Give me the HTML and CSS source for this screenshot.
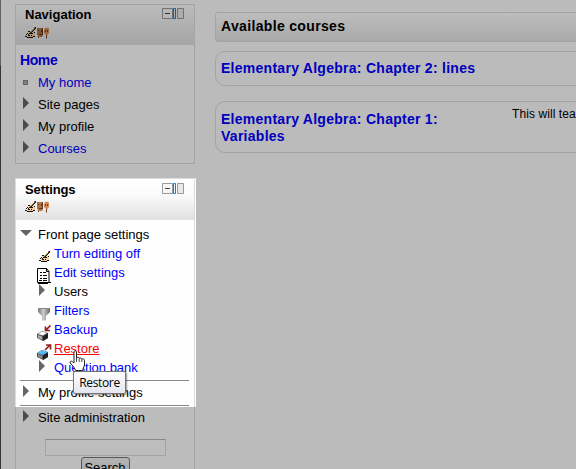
FILE: index.html
```html
<!DOCTYPE html>
<html lang="en">
<head>
<meta charset="utf-8">
<title>Course administration</title>
<link rel="stylesheet" href="styles.css">
</head>
<body>
<svg class="defs" width="0" height="0">
  <symbol id="hand" viewBox="0 0 11 11"><path d="M2 8 4 4.500 6 4 10 5V9L8 10H3z" fill="#f3cf9f"/><path d="M0 9h2v1H0zM1 7h1v1H1zM2 6h1v1H2zM3 4h2v1H3zM2 10h6v1H2zM8 9h2v1H8zM3 8h2v1H3zM9 5h1v1H9zM5 6h3v1H5zM6 8h1v1H6z" fill="#111"/><path d="M3 7h1V6h1V5h1V4h1V3h1V2h1V1h1V0h1v2h-1v1H9v1H8v1H7v1H6v1H4v1H3z" fill="#222"/><path d="M5 5.500 9 1.500" stroke="#e7d64a" stroke-width=".9"/><path d="M9 0h1v1H9z" fill="#b56b7d"/></symbol>
  <symbol id="roles" viewBox="0 0 12 12"><path d="M0 1h6v7l-1 2H3L0 8z" fill="#b07247"/><path d="M1 3h1v1H1zM4 3h1v2H4zM2 7h3v1H2zM5 1h1v7H5z" fill="#5b351e"/><path d="M8 1 10 0.500 12 1.500V6L10.500 8H9L7 6V3z" fill="#d18a51"/><path d="M8.500 3v2M10.500 3v2M9.500 8v3.500M1.500 9v2" stroke="#754421"/></symbol>
  <symbol id="dock" viewBox="0 0 22 11"><path d="M.5.500h10v10H.5z" fill="#f7f7f7" stroke="#999"/><path d="M3 5.500h5" stroke="#444"/><path d="M11.500.500h2v10h-2z" fill="#e9f5ff" stroke="#0c80df"/><path d="M15.500.500h6v10h-6z" fill="#e8e8e8" stroke="#999"/></symbol>
</svg>
<div class="page">
  <div class="edge"></div>
  <aside class="sidebar">
    <section class="block nav">
      <header class="head">
        <h2>Navigation</h2><svg class="dock"><use href="#dock"/></svg>
        <div class="tools"><svg><use href="#hand"/></svg><svg class="roles"><use href="#roles"/></svg></div>
      </header>
      <ul class="tree">
        <li class="home"><a>Home</a></li>
        <li><i class="dot"></i><a>My home</a></li>
        <li><i class="arrow"></i>Site pages</li>
        <li><i class="arrow"></i>My profile</li>
        <li><i class="arrow"></i><a>Courses</a></li>
      </ul>
    </section>
    <section class="block settings">
      <header class="head">
        <h2>Settings</h2><svg class="dock"><use href="#dock"/></svg>
        <div class="tools"><svg><use href="#hand"/></svg><svg class="roles"><use href="#roles"/></svg></div>
      </header>
      <div class="branch"><i class="arrow open"></i>Front page settings</div>
      <ul class="sub">
        <li><svg class="ico edit" viewBox="0 0 11 11"><use href="#hand"/></svg><a>Turn editing off</a></li>
        <li><svg class="ico doc" viewBox="0 0 15 16"><path d="M.5.500h9l2.500 3V14.500H.5z" fill="#fff" stroke="#000"/><path d="M9.500.500v3H12M3 4.500h2m1 0h3M3 7.500h2m1 0h4M3 10.500h2m1 0h4M2 12.500h3m1 0h4M1 15.500h10M12 14.500h2" fill="none" stroke="#000"/></svg><a>Edit settings</a></li>
        <li><i class="arrow"></i>Users</li>
        <li><svg class="ico filter" viewBox="0 0 12 13"><defs><linearGradient id="metal"><stop stop-color="#777"/><stop offset=".45" stop-color="#ccc"/><stop offset="1" stop-color="#666"/></linearGradient></defs><path d="M0 0h12v4L8 8v4.500H4V8L0 4z" fill="url(#metal)"/><path d="M0 .500h12" stroke="#888"/></svg><a>Filters</a></li>
        <li><svg class="ico cube" viewBox="0 0 15 16"><path d="M0 9 5 6l6 2v5l-5 3-6-3z" fill="#555"/><path d="M6 11l5-3v5l-5 3z" fill="#222"/><path d="M1 9l4-2.500L10 8l-4 2.500z" fill="#fff"/><path d="M1 10l4 1.500v3L1 13z" fill="#aaa"/><path d="M13.500 .500 9 5M8.500 1.500v4H13" fill="none" stroke="#8d1d22" stroke-width="1.700"/></svg><a>Backup</a></li>
        <li><svg class="ico cube" viewBox="0 0 15 16"><path d="M0 9 5 6l6 2v5l-5 3-6-3z" fill="#555"/><path d="M6 11l5-3v5l-5 3z" fill="#222"/><path d="M0 9l5-3 6 2-5 3z" fill="#55b9f2"/><path d="M1 10l4 1.500v3L1 13z" fill="#888"/><path d="M8 6 13 1M9 1h4.500V5.500" fill="none" stroke="#8d1d22" stroke-width="1.700"/></svg><a class="hot">Restore</a></li>
        <li><i class="arrow"></i><a>Question bank</a></li>
      </ul>
      <div class="branch ruled"><i class="arrow"></i>My profile settings</div>
      <div class="branch ruled"><i class="arrow"></i>Site administration</div>
      <form class="search"><input type="text" aria-label="Search"><button type="button">Search</button></form>
    </section>
  </aside>
  <main>
    <h2 class="title">Available courses</h2>
    <article class="course"><h3><a>Elementary Algebra: Chapter 2: lines</a></h3></article>
    <article class="course tall"><h3><a>Elementary Algebra: Chapter 1: Variables</a></h3><p>This will tea</p></article>
  </main>
</div>
<div class="spotlight"></div>
<div class="tooltip">Restore</div>
<svg class="cursor" viewBox="0 0 17 22"><path d="M5 1.500C5 .500 7.500.500 7.500 1.800V8C8 7 10 7.200 10.200 8.300 11 7.500 12.700 8 12.800 9.200 13.700 8.500 15.500 9 15.500 10.500V15L13.500 20.500H6.500L5.500 18 1.200 13C.5 11.500 2 10.500 3.500 11.800L5 13z" fill="#fff" stroke="#222"/><path d="M7.500 8v4M10.200 8.500V12M12.800 9.500V12" stroke="#222" stroke-width=".8"/></svg>
</body>
</html>
```

FILE: styles.css
```css
* { box-sizing: border-box; }
html, body { height: 100%; overflow: hidden; }
body { margin: 0; background: #fcfcfc; color: #000; font: 13px/19px "Liberation Sans", Arial, sans-serif; }
h2, h3, p, ul { margin: 0; padding: 0; }
ul { list-style: none; }
a { color: #00f; }
.defs { position: absolute; }
.page { display: flex; height: 469px; overflow: hidden; }
.edge { width: 1px; height: 469px; flex: none; background: linear-gradient(#858585 65px, #484848 66px); }
.sidebar { width: 180px; flex: none; margin: 4px 0 0 14px; }
.block { border: 1px solid #ddd; background: #fefefe; }
.nav { height: 160px; }
.settings { height: 310px; margin-top: 14px; }
.head { display: grid; grid-template-columns: 1fr 22px; align-content: start; height: 40px; padding: 0 10px 0 9px; background: linear-gradient(#fff, #fafafa 40%, #e0e0e0); }
.nav .head { background: linear-gradient(#fcfcfc, #e0e0e0); }
.head h2 { font-size: 13px; line-height: 20px; }
.settings .head { height: 41px; }
.settings .head h2 { line-height: 22px; letter-spacing: -.1px; }
.dock { width: 22px; height: 11px; margin-top: 3px; }
.settings .dock { margin-top: 4px; }
.tools { display: flex; gap: 1px; padding-top: 2px; }
.settings .tools { padding-top: 0; }
.tools svg { width: 11px; height: 11px; }
.tools .roles { width: 12px; height: 12px; }
.tree { padding-top: 5px; }
.tree li { display: flex; height: 22px; line-height: 22px; padding-left: 7px; }
.tree .home { padding-left: 4px; font-size: 14px; line-height: 21px; font-weight: bold; letter-spacing: -.4px; }
.arrow { flex: none; width: 15px; height: 12px; }
.arrow::before { content: ""; display: block; width: 0; height: 0; border-left: 6px solid #666; border-top: 6px solid transparent; border-bottom: 6px solid transparent; }
.tree .arrow { margin-top: 3px; }
.dot { width: 5px; height: 5px; margin: 8px 10px 0 0; background: #aaa; border: 1px solid #888; }
.branch { display: flex; height: 24px; padding: 0 0 0 7px; line-height: 30px; }
.arrow.open { width: 18px; margin: 10px 0 0 -3px; }
.arrow.open::before { border-left: 6px solid transparent; border-right: 6px solid transparent; border-top: 6px solid #666; border-bottom: 0; }
.sub { height: 136px; }
.sub li { display: flex; height: 19px; padding-left: 20px; line-height: 19px; }
.sub .arrow { width: 15px; margin: 2px -3px 0 3px; }
.sub .arrow { margin-right: 0; }
.ico { flex: none; width: 15px; height: 16px; margin: 5px 2px 0 1px; }
.ico.edit { width: 11px; height: 11px; margin: 7px 4px 0 3px; }
.ico.filter { width: 12px; height: 13px; margin: 7px 4px 0 2px; }
.hot { color: #f00; text-decoration: underline; }
.ruled { height: 25px; line-height: 24px; margin: 0 5px 0 4px; padding-left: 3px; border-top: 1px solid #888; }
.ruled .arrow { margin-top: 4px; }
.search { display: flex; flex-direction: column; align-items: center; padding-top: 9px; }
.search input { width: 121px; height: 17px; border: 1px solid #d9dce2; border-top-color: #b5b8bd; border-radius: 1px; background: #fff; }
.search button { width: 49px; height: 21px; margin-top: 1px; padding: 0; border: 1px solid #777; border-radius: 3px; background: linear-gradient(#f4f4f4, #ddd); font: 13px "Liberation Sans", Arial, sans-serif; }
main { width: 600px; flex: none; margin: 12px 0 0 20px; }
.title { height: 30px; padding-left: 5px; border: 1px solid #ddd; border-radius: 3px; background: linear-gradient(#fff, #e5e5e5); font-size: 14px; line-height: 27px; letter-spacing: .34px; }
.course { display: flex; height: 35px; margin-top: 9px; padding-left: 5px; border: 1px solid #ddd; border-radius: 10px; }
.course h3 { width: 291px; flex: none; padding-top: 8px; font-size: 14px; line-height: 17px; letter-spacing: .27px; }
.course.tall { height: 52px; margin-top: 15px; }
.course.tall h3 { width: 250px; padding-top: 9px; margin-right: 41px; }
.course p { padding-top: 3px; font-size: 12px; white-space: nowrap; letter-spacing: .08px; }
.spotlight { position: absolute; left: 15px; top: 178px; width: 181px; height: 229px; box-shadow: 0 0 0 999px rgba(0, 0, 0, .26); }
.tooltip { position: absolute; left: 73px; top: 371px; width: 53px; height: 23px; border: 1px solid #767676; border-radius: 2px; background: linear-gradient(#fff, #e4e5f0); box-shadow: 1px 1px 2px rgba(0, 0, 0, .4); font: 12px/22px "Open Sans", "Noto Sans", sans-serif; letter-spacing: -.35px; text-align: center; }
.cursor { position: absolute; left: 69px; top: 350px; width: 17px; height: 22px; }
```
